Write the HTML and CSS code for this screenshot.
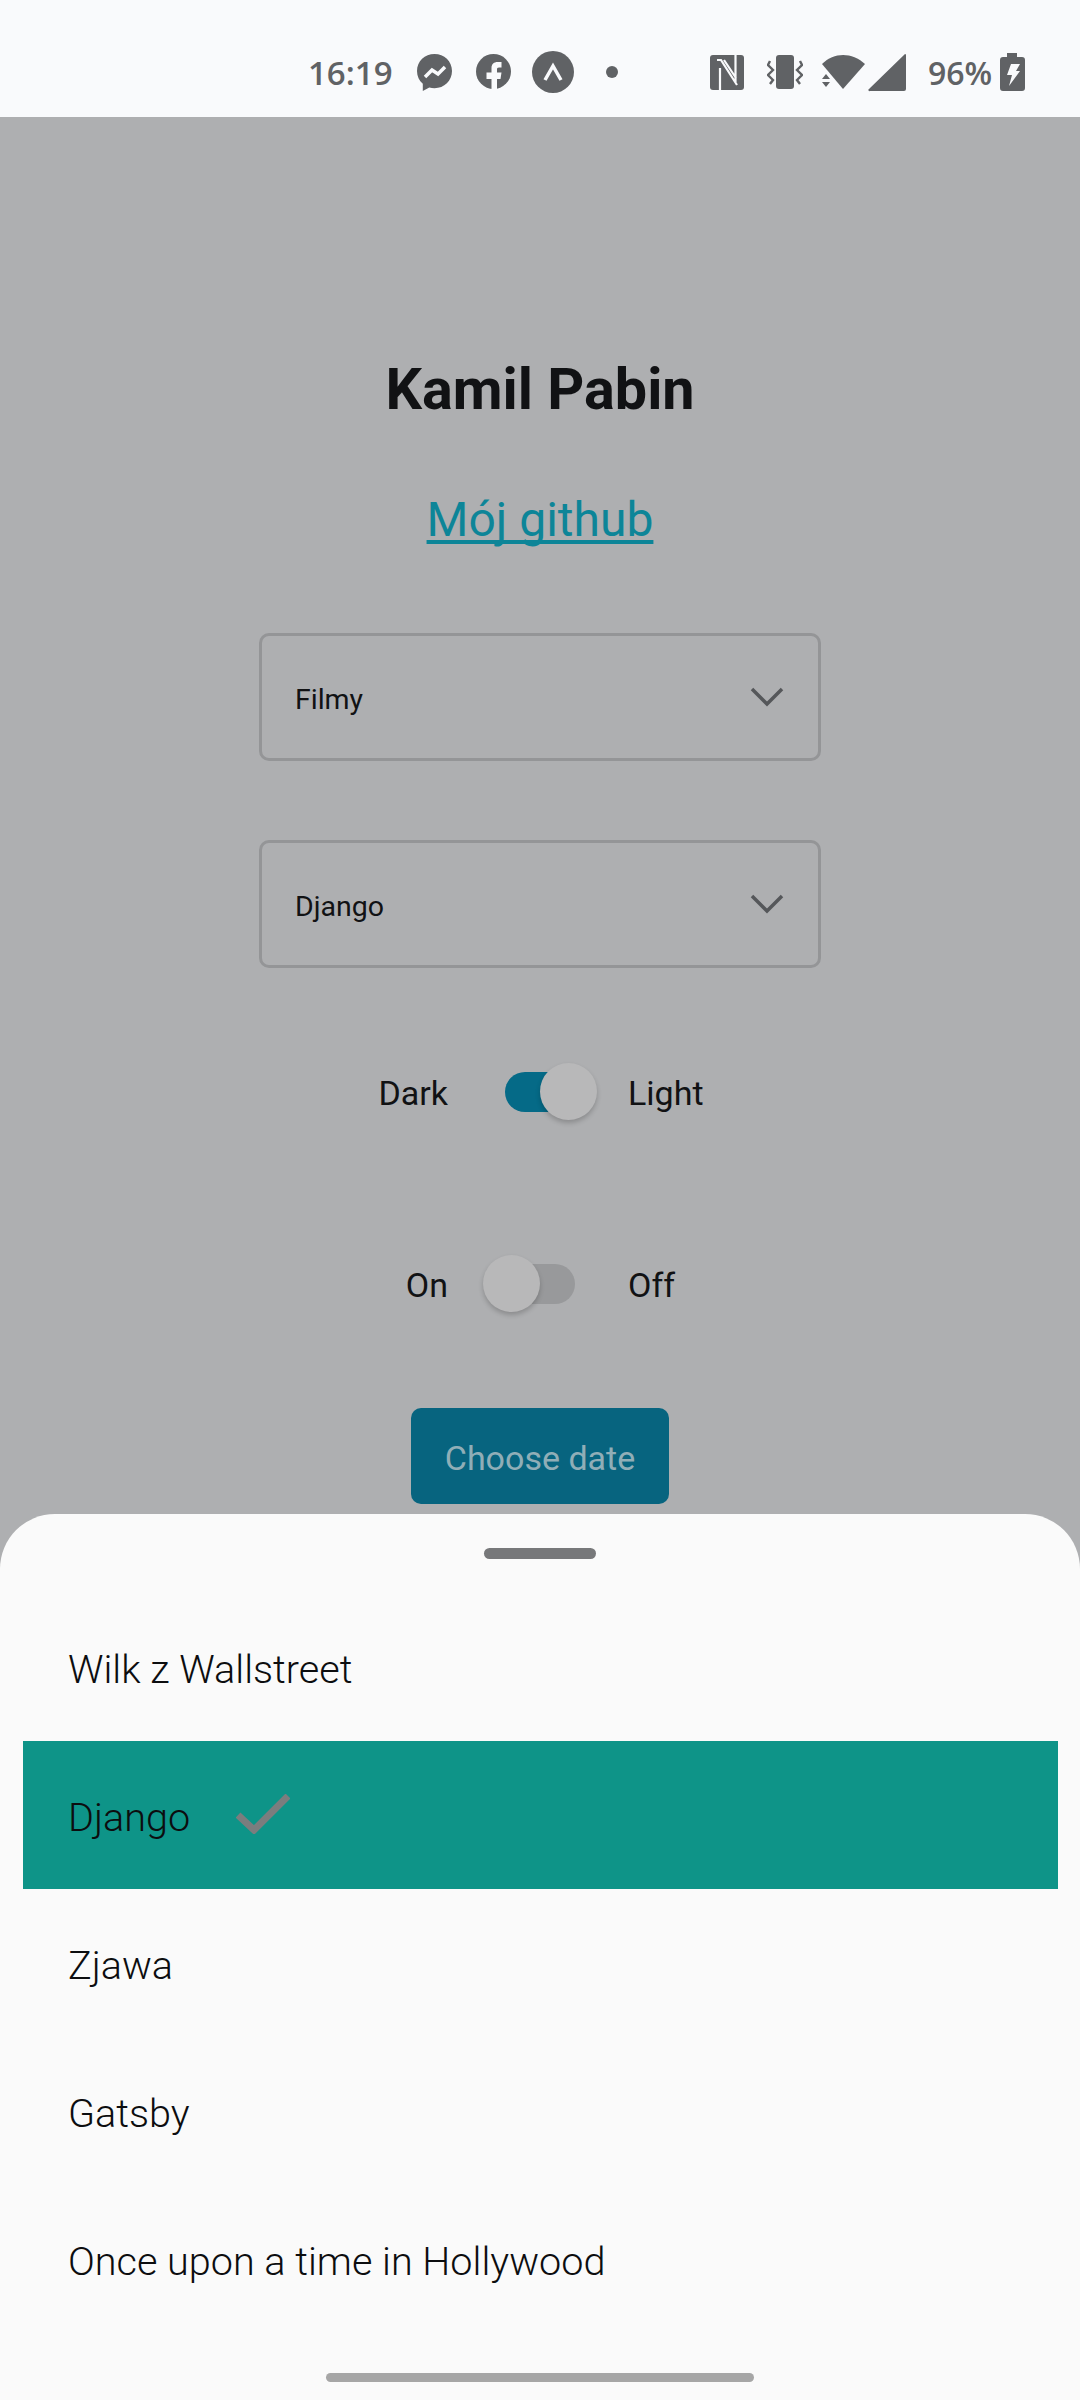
FILE: index.html
```html
<!DOCTYPE html>
<html lang="en">

<head>
  <meta charset="UTF-8">
  <title>Kamil Pabin</title>
  <link rel="stylesheet" href="styles.css">
</head>

<body>

  <header class="statusbar">
    <span class="clock">16:19</span>
    <svg class="icon msgr" width="35" height="37" viewBox="0 0 35 37">
      <path d="M17.5 0C7.8 0 0 7.3 0 17c0 5.200 2.200 9.600 5.800 12.700V37l6.500-3.400c1.700.4 3.400.6 5.200.6 9.700 0 17.500-7.500 17.500-17.200S27.200 0 17.500 0z" fill="#606265" />
      <polyline points="8,23 15,16 21,20 28,13" fill="none" stroke="#f9fafc" stroke-width="3.500" />
    </svg>
    <svg class="icon fb" width="35" height="36" viewBox="0 0 35 36">
      <circle cx="17.500" cy="17.500" r="17.500" fill="#606265" />
      <path d="M15.500 36V25H10.500V18.500H15.500V14C15.500 10 18 8 21.500 8H25.500V13.500H23C21.400 13.500 21 14.300 21 15.500V18.500H25.500L24.500 25H21V36Z" fill="#f9fafc" />
    </svg>
    <svg class="icon lambda" width="42" height="42" viewBox="0 0 42 42">
      <circle cx="21" cy="21" r="21" fill="#606265" />
      <polyline points="13,29 21,15 29,29" fill="none" stroke="#f9fafc" stroke-width="3.500" />
    </svg>
    <span class="dot"></span>
    <svg class="icon nfc" width="34" height="35" viewBox="0 0 34 35">
      <rect width="34" height="35" rx="3" fill="#606265" />
      <path d="M10 35V13M7 5H11L27 30M14 5L26 23M25.500 0V27" fill="none" stroke="#f9fafc" stroke-width="2.200" />
    </svg>
    <svg class="icon vibrate" width="36" height="36" viewBox="0 0 36 36">
      <rect x="9" y="1" width="18" height="34" rx="3" fill="#606265" />
      <path d="M3 7L1 11L6 16L1 21L6 26L3 30M33 7L35 11L30 16L35 21L30 26L33 30" fill="none" stroke="#606265" stroke-width="2.400" />
    </svg>
    <svg class="icon wifi" width="43" height="36" viewBox="0 0 43 36">
      <path d="M0 10C12 -2 30 -2 43 10L21 35Z" fill="#606265" />
      <path d="M4 20L8 25H0ZM0 28H8L4 33Z" fill="#606265" />
    </svg>
    <svg class="icon signal" width="38" height="39" viewBox="0 0 38 39">
      <path d="M37 1A1 1 0 0 1 38 2V36A2 2 0 0 1 36 38H2A1 1 0 0 1 1 36Z" fill="#606265" />
    </svg>
    <span class="battery-text">96%</span>
    <svg class="icon battery" width="25" height="38" viewBox="0 0 25 38">
      <path d="M7 0H17V4H22A3 3 0 0 1 25 7V35A3 3 0 0 1 22 38H3A3 3 0 0 1 0 35V7A3 3 0 0 1 3 4H7Z" fill="#606265" />
      <path d="M11 11H20L16 18H20L9 33L12 22H7Z" fill="#f9fafc" />
    </svg>
  </header>

  <main class="content">
    <h1 class="title">Kamil Pabin</h1>
    <a class="github" href="#">Mój github</a>

    <div class="select select-first">
      <span class="select-label">Filmy</span>
      <svg width="34" height="22" viewBox="0 0 34 22">
        <polyline points="2,3 17,18 32,3" fill="none" stroke="#55575a" stroke-width="3.500" />
      </svg>
    </div>
    <div class="select select-second">
      <span class="select-label">Django</span>
      <svg width="34" height="22" viewBox="0 0 34 22">
        <polyline points="2,3 17,18 32,3" fill="none" stroke="#55575a" stroke-width="3.500" />
      </svg>
    </div>

    <div class="toggle-row toggle-theme">
      <span class="toggle-left">Dark</span>
      <span class="switch switch-on"><span class="thumb"></span></span>
      <span class="toggle-right">Light</span>
    </div>
    <div class="toggle-row toggle-power">
      <span class="toggle-left">On</span>
      <span class="switch"><span class="thumb"></span></span>
      <span class="toggle-right">Off</span>
    </div>

    <button class="date-btn" type="button">Choose date</button>
  </main>

  <section class="sheet">
    <div class="handle"></div>
    <ul class="movies">
      <li>Wilk z Wallstreet</li>
      <li class="selected">
        Django
        <svg width="54" height="40" viewBox="0 0 54 40">
          <polyline points="2,21 18,36 52,2" fill="none" stroke="#7b7d7e" stroke-width="7" />
        </svg>
      </li>
      <li>Zjawa</li>
      <li>Gatsby</li>
      <li>Once upon a time in Hollywood</li>
    </ul>
    <div class="home-bar"></div>
  </section>

</body>

</html>
```

FILE: styles.css
```css
* {
  box-sizing: border-box;
}

html,
body {
  margin: 0;
  height: 2400px;
}

body {
  position: relative;
  overflow: hidden;
  font-family: Roboto, "Liberation Sans", sans-serif;
  background-color: #aeafb1;
  color: #111214;
}

/* status bar */
.statusbar {
  height: 117px;
  padding: 27px 0 0 308px;
  display: flex;
  align-items: center;
  background-color: #f9fafc;
  color: #606265;
  font-family: "Open Sans", "Noto Sans", sans-serif;
  font-weight: 600;
  font-size: 33px;
}

.icon {
  flex: none;
}

.clock {
  width: 83px;
}

.msgr {
  margin-left: 26px;
}

.fb {
  margin-left: 24px;
}

.lambda {
  margin-left: 21px;
}

.dot {
  width: 12px;
  height: 12px;
  margin-left: 32px;
  border-radius: 50%;
  background-color: #606265;
}

.nfc {
  margin-left: 92px;
}

.vibrate {
  margin-left: 23px;
}

.wifi {
  margin-left: 19px;
}

.signal {
  margin-left: 3px;
}

.battery-text {
  width: 61px;
  margin-left: 22px;
  font-size: 32px;
  white-space: nowrap;
}

.battery {
  margin-left: 11px;
}

/* page behind the sheet */
.content {
  display: flex;
  flex-direction: column;
  align-items: center;
}

.title {
  margin: 240px 0 0;
  font-size: 57.500px;
  line-height: 66px;
  font-weight: 700;
}

.github {
  margin-top: 67px;
  font-size: 48px;
  line-height: 60px;
  color: #0d8598;
  text-decoration-skip-ink: none;
  text-underline-offset: 4px;
}

.select {
  width: 562px;
  height: 128px;
  padding: 0 34px 0 33px;
  display: flex;
  align-items: center;
  justify-content: space-between;
  border: 3px solid #949597;
  border-radius: 10px;
  font-size: 28.500px;
}

.select-label {
  padding-top: 4px;
}

.select-first {
  margin-top: 83px;
}

.select-second {
  margin-top: 79px;
}

.toggle-row {
  width: 100%;
  height: 60px;
  display: grid;
  grid-template-columns: 1fr 70px 1fr;
  align-items: center;
  font-size: 34px;
}

.toggle-theme {
  margin-top: 94px;
}

.toggle-power {
  margin-top: 132px;
}

.toggle-left {
  margin-right: 57px;
  padding-top: 2px;
  text-align: right;
}

.toggle-right {
  margin-left: 53px;
  padding-top: 2px;
}

.switch {
  position: relative;
  height: 40px;
  border-radius: 20px;
  background-color: #98999b;
}

.switch-on {
  background-color: #056a87;
}

.thumb {
  position: absolute;
  top: -9px;
  left: -22px;
  width: 57px;
  height: 57px;
  border-radius: 50%;
  background-color: #b8b8b9;
  box-shadow: 0 3px 5px rgba(0, 0, 0, 0.2);
}

.switch-on .thumb {
  left: 35px;
}

.date-btn {
  width: 258px;
  height: 96px;
  margin-top: 94px;
  padding-top: 4px;
  border: none;
  border-radius: 10px;
  background-color: #07647f;
  color: #90aeb7;
  font-family: inherit;
  font-size: 34px;
}

/* bottom sheet */
.sheet {
  position: absolute;
  left: 0;
  right: 0;
  bottom: 0;
  height: 886px;
  padding-top: 34px;
  border-radius: 55px 55px 0 0;
  background-color: #fafafa;
  display: flex;
  flex-direction: column;
  align-items: center;
}

.handle {
  width: 112px;
  height: 11px;
  border-radius: 6px;
  background-color: #77787a;
}

.movies {
  width: 100%;
  margin: 34px 0 0;
  padding: 0 22px 0 23px;
  list-style: none;
}

.movies li {
  height: 148px;
  padding-left: 45px;
  display: flex;
  align-items: center;
  gap: 46px;
  padding-top: 4px;
  font-size: 39.600px;
  font-weight: 300;
  color: #0c0d0f;
}

.movies .selected {
  background-color: #0e9488;
}

.movies svg {
  margin-top: -7px;
}

.home-bar {
  width: 428px;
  height: 9px;
  margin-top: 40px;
  border-radius: 5px;
  background-color: #a6a6a6;
}
```
